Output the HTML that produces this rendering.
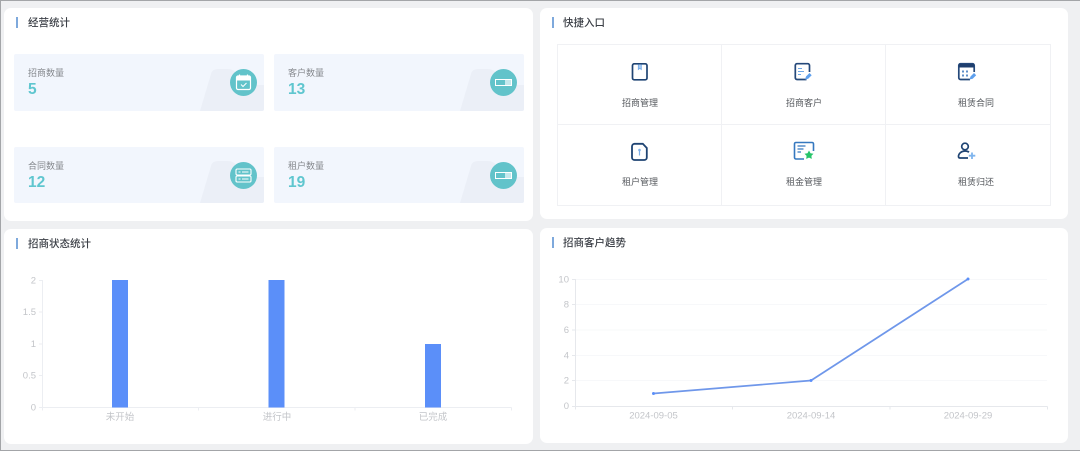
<!DOCTYPE html>
<html lang="zh">
<head>
<meta charset="utf-8">
<title>Dashboard</title>
<style>
html,body{margin:0;padding:0}
body{width:1080px;height:451px;overflow:hidden;background:#eff0f2;position:relative;font-family:"Liberation Sans","Noto Sans CJK SC",sans-serif}
.edge{position:absolute;background:#a3a5a8}
.panel{position:absolute;background:#fff;border-radius:7px}
.bar{position:absolute;width:2px;height:11px;background:#7ea9dc}
.title{position:absolute;font-size:10.5px;line-height:14px;color:#3c4047;font-weight:500;white-space:nowrap}
.card{position:absolute;width:250px;background:#f2f6fd;overflow:hidden;border-radius:2px}
.card svg.bg{position:absolute;right:0;bottom:0}
.card .lbl{position:absolute;left:14px;top:13px;font-size:9px;line-height:13px;color:#85888d;white-space:nowrap}
.card .num{position:absolute;left:14px;top:27px;font-size:15.5px;line-height:18px;font-weight:bold;color:#5fc6cf}
.circle{position:absolute;left:216px;top:15px;width:27px;height:27px;border-radius:50%;background:#62c3ca}
.grid{position:absolute;left:557px;top:44px;width:492px;height:160px;border:1px solid #f0f1f4}
.gl{position:absolute;background:#f0f1f4}
.ql{position:absolute;width:80px;text-align:center;font-size:9px;line-height:13px;color:#55585d;white-space:nowrap}
.ic{position:absolute}
svg.chart{position:absolute;left:0;top:0}
svg.chart path{fill:none}
svg.chart text{font-family:"Liberation Sans","Noto Sans CJK SC",sans-serif;font-size:9.5px;fill:#c3c5c9}
</style>
</head>
<body>
<div class="edge" style="left:0;top:0;width:1080px;height:1px"></div>
<div class="edge" style="left:0;top:0;width:1px;height:451px"></div>
<div class="edge" style="left:0;top:450px;width:1080px;height:1px"></div>

<div class="panel" style="left:4px;top:8px;width:529px;height:213px"></div>
<div class="panel" style="left:540px;top:8px;width:528px;height:211px"></div>
<div class="panel" style="left:4px;top:229px;width:529px;height:215px"></div>
<div class="panel" style="left:540px;top:228px;width:528px;height:215px"></div>

<div class="bar" style="left:16px;top:17px"></div>
<div class="title" style="left:28px;top:16px">经营统计</div>
<div class="bar" style="left:552px;top:17px"></div>
<div class="title" style="left:563px;top:16px">快捷入口</div>
<div class="bar" style="left:16px;top:238px"></div>
<div class="title" style="left:28px;top:237px">招商状态统计</div>
<div class="bar" style="left:552px;top:237px"></div>
<div class="title" style="left:563px;top:236px">招商客户趋势</div>

<!-- stat cards -->
<div class="card" style="left:14px;top:54px;height:57px">
  <svg class="bg" width="64" height="42" viewBox="0 0 64 42"><path d="M0 42 L11 5 Q12 0 18 0 L28 0 Q34 0 38 6 L46 16 L64 16 L64 42 Z" fill="#ebeff7"/></svg>
  <div class="lbl">招商数量</div><div class="num">5</div>
  <div class="circle"><svg width="27" height="27" viewBox="0 0 27 27"><rect x="6.500" y="7" width="14" height="13.500" rx="1.500" fill="none" stroke="#fff" stroke-width="1.200"/><path d="M6.500 8.500 Q6.500 7 8 7 L19 7 Q20.500 7 20.500 8.500 L20.500 11.500 L6.500 11.500 Z" fill="#fff"/><path d="M9.500 5.500V8M17.500 5.500V8" stroke="#fff" stroke-width="1.200"/><path d="M11 15.500l2 2 3.500-3.500" fill="none" stroke="#fff" stroke-width="1"/></svg></div>
</div>
<div class="card" style="left:274px;top:54px;height:57px">
  <svg class="bg" width="64" height="42" viewBox="0 0 64 42"><path d="M0 42 L11 5 Q12 0 18 0 L28 0 Q34 0 38 6 L46 16 L64 16 L64 42 Z" fill="#ebeff7"/></svg>
  <div class="lbl">客户数量</div><div class="num">13</div>
  <div class="circle"><svg width="27" height="27" viewBox="0 0 27 27"><rect x="5.500" y="10.500" width="16" height="6" fill="none" stroke="#fff" stroke-width="1"/><rect x="15" y="11" width="6" height="5" fill="#dff3f5" opacity=".8"/></svg></div>
</div>
<div class="card" style="left:14px;top:147px;height:56px">
  <svg class="bg" width="64" height="42" viewBox="0 0 64 42"><path d="M0 42 L11 5 Q12 0 18 0 L28 0 Q34 0 38 6 L46 16 L64 16 L64 42 Z" fill="#ebeff7"/></svg>
  <div class="lbl">合同数量</div><div class="num">12</div>
  <div class="circle"><svg width="27" height="27" viewBox="0 0 27 27"><rect x="6" y="7" width="15" height="6" rx="1.200" fill="none" stroke="#fff" stroke-width="1.100"/><rect x="6" y="14" width="15" height="6" rx="1.200" fill="none" stroke="#fff" stroke-width="1.100"/><path d="M8.500 10h2M12 10h6.500M8.500 17h2M12 17h6.500" stroke="#fff" stroke-width="1"/></svg></div>
</div>
<div class="card" style="left:274px;top:147px;height:56px">
  <svg class="bg" width="64" height="42" viewBox="0 0 64 42"><path d="M0 42 L11 5 Q12 0 18 0 L28 0 Q34 0 38 6 L46 16 L64 16 L64 42 Z" fill="#ebeff7"/></svg>
  <div class="lbl">租户数量</div><div class="num">19</div>
  <div class="circle"><svg width="27" height="27" viewBox="0 0 27 27"><rect x="5.500" y="10.500" width="16" height="6" fill="none" stroke="#fff" stroke-width="1"/><rect x="15" y="11" width="6" height="5" fill="#dff3f5" opacity=".8"/></svg></div>
</div>

<!-- quick entry grid -->
<div class="grid"></div>
<div class="gl" style="left:721px;top:44px;width:1px;height:161px"></div>
<div class="gl" style="left:885px;top:44px;width:1px;height:161px"></div>
<div class="gl" style="left:557px;top:124px;width:493px;height:1px"></div>

<svg class="ic" style="left:630px;top:62px" width="20" height="20" viewBox="0 0 20 20"><rect x="2.500" y="1.800" width="14.500" height="16" rx="1.700" fill="none" stroke="#1f4473" stroke-width="1.700"/><path d="M8.300 2.500v5l1.500-1.200 1.500 1.200v-5" fill="#a9cbf2" stroke="#6fa8e8" stroke-width=".8"/></svg>
<div class="ql" style="left:600px;top:97px">招商管理</div>

<svg class="ic" style="left:793px;top:62px" width="20" height="20" viewBox="0 0 20 20"><path d="M13.500 17.500H4a1.700 1.700 0 0 1-1.700-1.700V3.400A1.700 1.700 0 0 1 4 1.700h10.800a1.700 1.700 0 0 1 1.700 1.700V10" fill="none" stroke="#24487a" stroke-width="1.700"/><path d="M5 6.500h4M5 9.500h6M5 12.500h3" stroke="#6fa8e8" stroke-width="1.100"/><path d="M12 17.500l1-3 3.500-3.500 2.200 2.200-3.500 3.500z" fill="#5ea0ee"/></svg>
<div class="ql" style="left:764px;top:97px">招商客户</div>

<svg class="ic" style="left:957px;top:62px" width="20" height="20" viewBox="0 0 20 20"><path d="M13 17.500H3.500a1.700 1.700 0 0 1-1.700-1.700V3.400a1.700 1.700 0 0 1 1.700-1.700h12a1.700 1.700 0 0 1 1.700 1.700V10" fill="none" stroke="#24487a" stroke-width="1.700"/><path d="M2 2h15v3.500H2z" fill="#1f3f6e"/><path d="M5 8.500h2v2H5zM9 8.500h2v2H9zM5 12.500h2v2H5zM9 12.500h2v2H9z" fill="#5f8fc8"/><path d="M12.500 17.500l1-3 3.500-3.500 2.200 2.200-3.500 3.500z" fill="#5ea0ee"/></svg>
<div class="ql" style="left:936px;top:97px">租赁合同</div>

<svg class="ic" style="left:630px;top:142px" width="20" height="20" viewBox="0 0 20 20"><path d="M4.500 1.800h8.300l4 4.200v9.500a2.500 2.500 0 0 1-2.500 2.500h-9.800A2.500 2.500 0 0 1 2 15.500v-11a2.700 2.700 0 0 1 2.500-2.700z" fill="none" stroke="#1f4473" stroke-width="1.800"/><path d="M9.500 8.500v5" stroke="#7fb0e8" stroke-width="1.200"/><circle cx="9.500" cy="8" r="1.300" fill="#7fb0e8"/></svg>
<div class="ql" style="left:600px;top:176px">租户管理</div>

<svg class="ic" style="left:793px;top:141px" width="22" height="20" viewBox="0 0 22 20"><path d="M11 18H3a1.500 1.500 0 0 1-1.500-1.500V2.800A1.500 1.500 0 0 1 3 1.500h16a1.500 1.500 0 0 1 1.500 1.300V10" fill="none" stroke="#3578bf" stroke-width="1.600"/><path d="M4.500 5h8M4.500 8h6M4.500 11h3.500" stroke="#3578bf" stroke-width="1.200"/><path d="M16 9.500l1.500 2.700 3 .5-2.100 2.200.4 3-2.800-1.300-2.800 1.300.4-3-2.100-2.200 3-.5z" fill="#27c46a"/></svg>
<div class="ql" style="left:764px;top:176px">租金管理</div>

<svg class="ic" style="left:957px;top:141px" width="20" height="20" viewBox="0 0 20 20"><circle cx="8" cy="5.500" r="3.300" fill="none" stroke="#1f4473" stroke-width="1.700"/><path d="M11 17H3c-1 0-1.500-.6-1.500-1.500 0-3 3-5.500 6.500-5.500 1.500 0 3 .4 4 1.200" fill="none" stroke="#1f4473" stroke-width="1.700"/><path d="M15 11.500v6.500M11.800 14.700h6.500" stroke="#7fb5ee" stroke-width="1.800"/></svg>
<div class="ql" style="left:936px;top:176px">租赁归还</div>

<!-- charts -->
<svg class="chart" width="1080" height="451">
  <!-- bar chart -->
  <g stroke="#eceef2" stroke-width="1">
    <path d="M42.500 280V407.500H511.500"/>
    <path d="M39 280.500h3.500M39 312h3.500M39 344h3.500M39 375.500h3.500M39 407.500h3.500"/>
    <path d="M42.500 407.500v3M198.500 407.500v3M355 407.500v3M511.500 407.500v3"/>
  </g>
  <rect x="112" y="280" width="16" height="127.500" fill="#5b8ff9"/>
  <rect x="268.500" y="280" width="16" height="127.500" fill="#5b8ff9"/>
  <rect x="425" y="344" width="16" height="63.500" fill="#5b8ff9"/>
  <g text-anchor="end">
    <text x="36" y="283.500">2</text>
    <text x="36" y="315">1.5</text>
    <text x="36" y="347">1</text>
    <text x="36" y="378.500">0.5</text>
    <text x="36" y="410.500">0</text>
  </g>
  <g text-anchor="middle">
    <text x="120" y="420">未开始</text>
    <text x="277" y="420">进行中</text>
    <text x="433" y="420">已完成</text>
  </g>

  <!-- line chart -->
  <g stroke="#f7f8fa" stroke-width="1">
    <path d="M575 304.500H1047M575 330H1047M575 355.500H1047M575 380.500H1047M575 279.500H1047"/>
  </g>
  <g stroke="#e6e8ec" stroke-width="1">
    <path d="M575.500 279V406.500H1047.500"/>
    <path d="M572 279.500h3.500M572 304.500h3.500M572 330h3.500M572 355.500h3.500M572 380.500h3.500M572 406.500h3.500"/>
    <path d="M575.500 406.500v3M732.500 406.500v3M890 406.500v3M1047.500 406.500v3"/>
  </g>
  <polyline points="653.500,393.500 811,380.500 968,279" fill="none" stroke="#6f97ea" stroke-width="1.700"/>
  <circle cx="653.500" cy="393.500" r="1.500" fill="#5b8ff9"/>
  <circle cx="811" cy="380.500" r="1.500" fill="#5b8ff9"/>
  <circle cx="968" cy="279" r="1.500" fill="#5b8ff9"/>
  <g text-anchor="end">
    <text x="569" y="282.500">10</text>
    <text x="569" y="307.500">8</text>
    <text x="569" y="333">6</text>
    <text x="569" y="358.500">4</text>
    <text x="569" y="383.500">2</text>
    <text x="569" y="409">0</text>
  </g>
  <g text-anchor="middle">
    <text x="653.500" y="418.500">2024-09-05</text>
    <text x="811" y="418.500">2024-09-14</text>
    <text x="968" y="418.500">2024-09-29</text>
  </g>
</svg>
</body>
</html>
